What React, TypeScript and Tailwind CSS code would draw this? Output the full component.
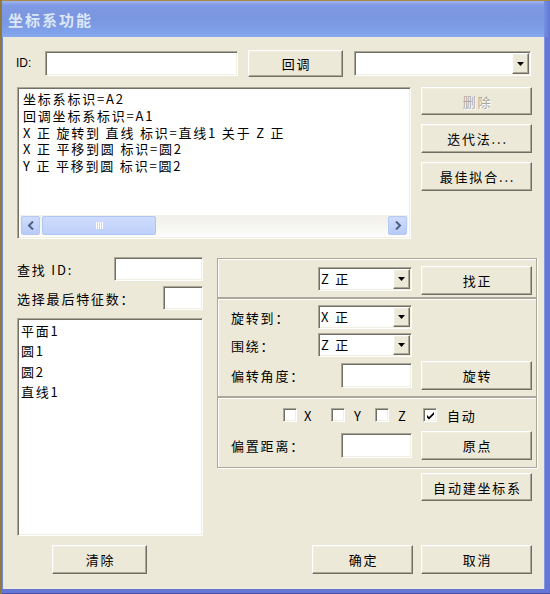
import React from "react";

const sunken =
  "border border-t-[#aca899] border-l-[#aca899] border-b-white border-r-white shadow-[inset_1px_1px_0_#716f64,inset_-1px_-1px_0_#f1efe2] bg-white";
const raised =
  "border border-t-white border-l-white border-b-[#716f64] border-r-[#716f64] shadow-[inset_-1px_-1px_0_#aca899,inset_1px_1px_0_#f1efe2] bg-[#ece9d8]";
const etched = "border border-[#aca899] shadow-[inset_1px_1px_0_#fff,1px_1px_0_#fff]";

function Btn({ className, children, disabled }: { className: string; children: React.ReactNode; disabled?: boolean }) {
  return (
    <div
      className={`${raised} ${className} flex items-center justify-center shrink-0 pl-[2px] ${
        disabled ? "text-[#aca899] [text-shadow:1px_1px_0_#fff]" : "text-black"
      }`}
    >
      {children}
    </div>
  );
}

function Arrow() {
  return (
    <div className={`${raised} w-[17px] h-full flex items-center justify-center shrink-0`}>
      <svg width="7" height="4" viewBox="0 0 7 4">
        <path d="M0 0h7L3.5 4z" fill="#000" />
      </svg>
    </div>
  );
}

function Combo({ className, value }: { className: string; value?: string }) {
  return (
    <div className={`${sunken} ${className} flex shrink-0 p-px`}>
      <div className="flex-1 flex items-center pl-[1px] leading-[14px]">{value}</div>
      <Arrow />
    </div>
  );
}

function Check({ checked }: { checked?: boolean }) {
  return (
    <div className={`${sunken} w-[14px] h-[14px] shrink-0 flex items-center justify-center`}>
      {checked && (
        <svg width="9" height="9" viewBox="0 0 9 9">
          <path d="M1 4l2 2 5-5v2.5L3 8.5 1 6.5z" fill="#000" />
        </svg>
      )}
    </div>
  );
}

export default function App() {
  const lines = [
    "坐标系标识=A2",
    "回调坐标系标识=A1",
    "X 正 旋转到 直线 标识=直线1 关于 Z 正",
    "X 正 平移到圆 标识=圆2",
    "Y 正 平移到圆 标识=圆2",
  ];
  const items = ["平面1", "圆1", "圆2", "直线1"];
  return (
    <div className="w-[550px] h-[594px] flex bg-[#ece9d8] text-[13px] leading-[15px] tracking-[1.8px] text-black [font-family:'Noto_Sans_CJK_SC',sans-serif] overflow-hidden">
      <div className="w-[2px] h-full bg-[#8e7a3c] shrink-0" />
      <div className="w-[548px] flex flex-col">
        <div className="h-px bg-[#a88a48]" />
        {/* Title bar */}
        <div className="h-[36px] flex bg-[linear-gradient(to_bottom,#a2b6ee_0%,#7f9ae2_12%,#7a96e0_50%,#7fa0ea_85%,#88aaee_100%)]">
          <div className="flex-1 flex items-center pl-[6px] text-[15px] font-bold text-[#dde7fa] tracking-[2px]">
            坐标系功能
          </div>
          <div className="w-[6px] bg-[linear-gradient(to_right,#7590e0,#6377d4)]" />
        </div>
        {/* Middle */}
        <div className="h-[552px] flex">
          <div className="w-px bg-[#7386d8]" />
          <div className="w-[541px] bg-[#ece9d8] flex flex-col">
            {/* Row 1 */}
            <div className="flex items-center h-[27px] mt-[13px]">
              <div className="ml-[13px] w-[29px] text-[12px] tracking-normal [font-family:'Liberation_Sans',sans-serif]">ID:</div>
              <div className={`${sunken} w-[193px] h-[25px]`} />
              <Btn className="ml-[10px] w-[95px] h-[27px]">回调</Btn>
              <Combo className="ml-[11px] w-[177px] h-[25px]" />
            </div>
            {/* Row 2 */}
            <div className="flex mt-[10px]">
              <div className={`${sunken} ml-[14px] w-[394px] h-[152px] p-[2px] flex flex-col`}>
                <div className="flex-1 pl-[3px] pt-px leading-[16.75px] whitespace-nowrap">
                  {lines.map((l, i) => (
                    <div key={i}>{l}</div>
                  ))}
                </div>
                <div className="h-[21px] flex items-center bg-[linear-gradient(to_bottom,#f0efe8,#fcfcfa)] px-px">
                  <div className="w-[19px] h-[19px] rounded-[2px] border border-[#b4c8f6] bg-[linear-gradient(to_bottom,#d0ddfc,#b7cbf8)] flex items-center justify-center">
                    <svg width="8" height="9" viewBox="0 0 8 9">
                      <path d="M6 0.5L2 4.5l4 4" stroke="#4d6185" strokeWidth="2" fill="none" />
                    </svg>
                  </div>
                  <div className="ml-[2px] w-[114px] h-[19px] rounded-[2px] border border-[#b0c4f4] bg-[linear-gradient(to_bottom,#cfdcfd,#bed0fa)] flex items-center justify-center gap-px">
                    <div className="w-px h-[7px] bg-white" />
                    <div className="w-px h-[7px] bg-white" />
                    <div className="w-px h-[7px] bg-white" />
                    <div className="w-px h-[7px] bg-white" />
                  </div>
                  <div className="flex-1" />
                  <div className="w-[19px] h-[19px] rounded-[2px] border border-[#b4c8f6] bg-[linear-gradient(to_bottom,#d0ddfc,#b7cbf8)] flex items-center justify-center">
                    <svg width="8" height="9" viewBox="0 0 8 9">
                      <path d="M2 0.5l4 4-4 4" stroke="#4d6185" strokeWidth="2" fill="none" />
                    </svg>
                  </div>
                </div>
              </div>
              <div className="ml-[10px] w-[111px] flex flex-col">
                <Btn className="w-[111px] h-[28px]" disabled>
                  删除
                </Btn>
                <Btn className="mt-[9px] w-[111px] h-[29px]">迭代法...</Btn>
                <Btn className="mt-[9px] w-[111px] h-[29px]">最佳拟合...</Btn>
              </div>
            </div>
            {/* Row 3 */}
            <div className="flex mt-[18px]">
              <div className="ml-[14px] w-[186px] flex flex-col">
                <div className="flex items-center h-[24px]">
                  <div className="flex-1">查找 ID:</div>
                  <div className={`${sunken} w-[89px] h-[24px]`} />
                </div>
                <div className="flex items-center h-[24px] mt-[5px]">
                  <div className="flex-1">选择最后特征数：</div>
                  <div className={`${sunken} w-[40px] h-[24px]`} />
                </div>
                <div className={`${sunken} mt-[8px] h-[218px] p-[2px] pl-[3px] leading-[20.3px]`}>
                  {items.map((t) => (
                    <div key={t}>{t}</div>
                  ))}
                </div>
                <Btn className="mt-[9px] ml-[35px] w-[95px] h-[29px]">清除</Btn>
              </div>
              <div className="ml-[14px] w-[320px] flex flex-col mt-px">
                {/* S1 */}
                <div className={`${etched} h-[40px] flex items-start`}>
                  <Combo className="ml-[100px] mt-[8px] w-[94px] h-[24px]" value="Z 正" />
                  <Btn className="ml-[9px] mt-[7px] w-[111px] h-[29px]">找正</Btn>
                </div>
                {/* S2 */}
                <div className={`${etched} h-[99px] flex flex-col`}>
                  <div className="flex items-center mt-[6px] h-[24px]">
                    <div className="ml-[13px] w-[87px]">旋转到：</div>
                    <Combo className="w-[94px] h-[24px]" value="X 正" />
                  </div>
                  <div className="flex items-center mt-[4px] h-[24px]">
                    <div className="ml-[13px] w-[87px]">围绕：</div>
                    <Combo className="w-[94px] h-[24px]" value="Z 正" />
                  </div>
                  <div className="flex items-center mt-[4px] h-[29px]">
                    <div className="ml-[13px] w-[110px]">偏转角度：</div>
                    <div className={`${sunken} w-[71px] h-[25px]`} />
                    <Btn className="ml-[9px] w-[111px] h-[29px]">旋转</Btn>
                  </div>
                </div>
                {/* S3 */}
                <div className={`${etched} h-[71px] flex flex-col`}>
                  <div className="flex items-center mt-[10px] h-[14px]">
                    <div className="ml-[65px]">
                      <Check />
                    </div>
                    <div className="ml-[7px] w-[27px]">X</div>
                    <Check />
                    <div className="ml-[9px] w-[21px]">Y</div>
                    <Check />
                    <div className="ml-[9px] w-[25px]">Z</div>
                    <Check checked />
                    <div className="ml-[10px]">自动</div>
                  </div>
                  <div className="flex items-center mt-[9px] h-[29px]">
                    <div className="ml-[13px] w-[110px]">偏置距离：</div>
                    <div className={`${sunken} w-[71px] h-[25px]`} />
                    <Btn className="ml-[9px] w-[111px] h-[29px]">原点</Btn>
                  </div>
                </div>
                <Btn className="mt-[5px] ml-[204px] w-[111px] h-[28px]">自动建坐标系</Btn>
                <div className="flex mt-[44px]">
                  <Btn className="ml-[95px] w-[101px] h-[29px]">确定</Btn>
                  <Btn className="ml-[8px] w-[111px] h-[29px]">取消</Btn>
                </div>
              </div>
            </div>
          </div>
          <div className="w-[6px] bg-[linear-gradient(to_right,#8595e2_0%,#8595e2_17%,#6676d6_17%,#6676d6_100%)]" />
        </div>
        <div className="h-[4px] bg-[#6676d6]" />
        <div className="h-px bg-[#4a50a8]" />
      </div>
    </div>
  );
}
